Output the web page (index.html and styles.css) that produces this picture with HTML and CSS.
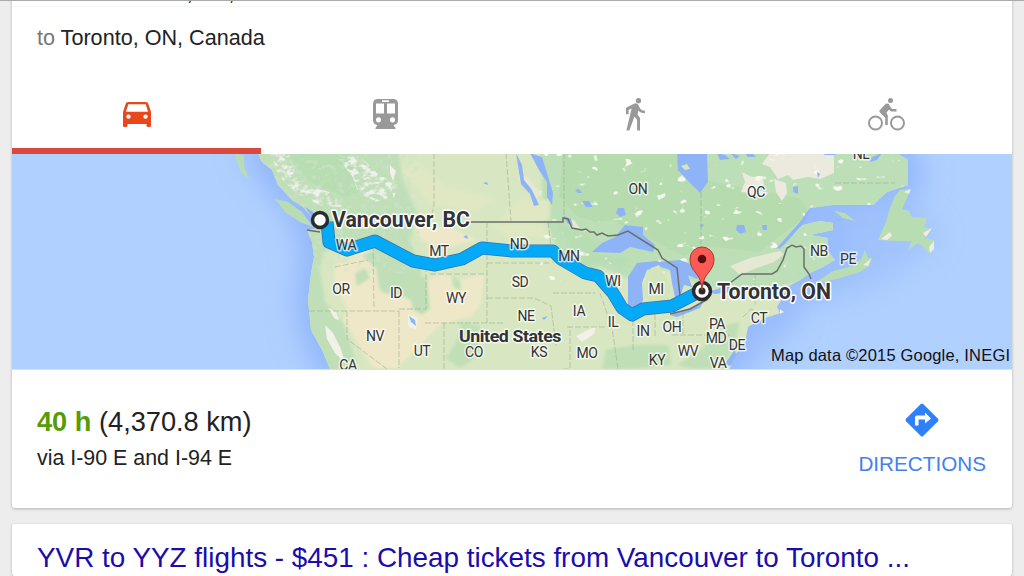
FILE: index.html
```html
<!DOCTYPE html>
<html lang="en">

<head>
  <meta charset="UTF-8">
  <title>Vancouver to Toronto</title>
  <link rel="stylesheet" href="styles.css">
</head>

<body>
  <div class="card directions-card">
    <div class="place from"><span>from</span> Vancouver, BC, Canada</div>
    <div class="place to"><span>to</span> Toronto, ON, Canada</div>

    <div class="tabs">
      <div class="tab active">
        <svg width="28" height="25" viewBox="0 0 28 25">
          <path fill="currentColor" fill-rule="evenodd" d="M5 0h18q1.700 0 2.300 1.700L28 10v13.500q0 1.500-1.500 1.500h-1.500q-1.500 0-1.500-1.500V22h-19v1.500Q4.500 25 3 25H1.500Q0 25 0 23.500V10L2.700 1.700Q3.300 0 5 0zM5.300 2.200L2.900 9.800h22.200L22.700 2.200zM5.500 12.400a2.200 2.200 0 1 0 .01 0zM22.500 12.400a2.200 2.200 0 1 0 .01 0z"/>
        </svg>
      </div>
      <div class="tab">
        <svg width="25" height="30" viewBox="0 0 25 30">
          <path fill="currentColor" fill-rule="evenodd" d="M5 0h15q5 0 5 5v16q0 4.500-4.500 5l2 3v1h-20v-1l2-3Q0 25.500 0 21V5q0-5 5-5zM9 1.300v1.700h7V1.300zM3 4.500v10h8v-10zM14 4.500v10h8v-10zM5.500 18.300a2.600 2.600 0 1 0 .01 0zM19.500 18.300a2.600 2.600 0 1 0 .01 0z"/>
        </svg>
      </div>
      <div class="tab">
        <svg width="20" height="33" viewBox="0 0 20 33">
          <circle cx="12.500" cy="2.700" r="2.600" fill="currentColor"/>
          <path fill="currentColor" d="M8.500 5.500h1.800q1.200 0 1.900 1.300l2.200 4.200q1.200 1.700 4.600 1.700v2.600q-4.500 0-6.600-2.800l-.8 4.300 2.400 3.200V32.500h-2.900V22l-2.600-3.500L3.300 32.500H.4L5.600 10.500l-3 1.600v4.100H0v-6.400z"/>
        </svg>
      </div>
      <div class="tab">
        <svg width="37" height="33" viewBox="0 0 37 33">
          <g fill="none" stroke="currentColor" stroke-width="2">
            <circle cx="7.500" cy="25" r="6.500"/>
            <circle cx="29.500" cy="25" r="6.500"/>
          </g>
          <circle cx="22.500" cy="2.600" r="2.500" fill="currentColor"/>
          <path fill="none" stroke="currentColor" stroke-width="2.600" stroke-linejoin="round" d="M18.500 27v-8.500l-5-4.500 5.500-6.500 4.500 4.700h5"/>
          <path fill="currentColor" d="M11 13l7-7.500 3 .5 1.500 4-4 4.500 1.500 4-3 1z"/>
        </svg>
      </div>
    </div>

    <svg class="map" width="1000" height="215" viewBox="12 154 1000 215">
      <defs>
        <path id="mainland" d="M258 153l4 9 10 8 6 15 14 15 11 7 7 8 10 13-13 2 5 12 2 15-3 16-3 27 3 30 11 20 8 19h400l3-12 12-14 3-16 12-7L780 313l-3-6 6-10 4-10 13-7 10-7 13-6 12-7-8-10 1-12-18-3L833 230v-7l-13-2-17 4-13 10-10 15-2-2L800 222l10-14 23-3h40l14-13 21-7v-25l-11-7z"/>
        <clipPath id="land">
          <use href="#mainland"/>
        </clipPath>
        <clipPath id="rockies">
          <path d="M270 153l18 0 12 30 32 10 10 14-20-1-25-12-18-18zM338 158l22-2 18 18 20 10-4 14-18 4-18-10-6-16z"/>
        </clipPath>
        <filter id="rock" x="0" y="0" width="1" height="1">
          <feTurbulence type="fractalNoise" baseFrequency=".14 .2" numOctaves="3" seed="4"/>
          <feColorMatrix values="0 0 0 0 .86  0 0 0 0 .86  0 0 0 0 .83  0 5 0 0 -2.200"/>
        </filter>
        <filter id="relief" x="0" y="0" width="1" height="1">
          <feTurbulence type="fractalNoise" baseFrequency=".16 .2" numOctaves="3" seed="8"/>
          <feColorMatrix values="0 0 0 0 .6  0 0 0 0 .77  0 0 0 0 .6  0 6 0 0 -3.200"/>
        </filter>
        <filter id="flecks" x="0" y="0" width="1" height="1">
          <feTurbulence type="fractalNoise" baseFrequency=".09 .12" numOctaves="2" seed="21"/>
          <feColorMatrix values="0 0 0 0 .93  0 0 0 0 .95  0 0 0 0 .87  0 12 0 0 -8.400"/>
        </filter>
        <filter id="soft"><feGaussianBlur stdDeviation="1.500"/></filter>
        <filter id="shelf" filterUnits="userSpaceOnUse" x="0" y="130" width="1024" height="260"><feGaussianBlur stdDeviation="14"/></filter>
      </defs>

      <rect x="12" y="153" width="1000" height="216" fill="#b0d0ff"/>
      <use href="#mainland" class="shelf" filter="url(#shelf)"/>
      <path filter="url(#shelf)" fill="#9bbefc" opacity=".7" d="M790 200l110-20 40 60-60 45-80 25-30 40-30 20z"/>

      <!-- land -->
      <use href="#mainland" fill="#d8e7c2"/>
      <g clip-path="url(#land)">
        <path filter="url(#soft)" fill="#c0dfb8" d="M240 150h158l5 30 14 32-7 30 12 28-10 30-25-5-17-14-12-33-17-5-18 10-3 18 5 30 18 22 14 40-8 10h-50V220z"/>
        <path fill="#b9ddb2" d="M288 153h60l12 14-2 26-14 4-30-12-14-14z"/>
        <path filter="url(#soft)" fill="#bcdfb7" d="M540 150h380v70l-110 60-60 12-50-6-22-15-40-2-8 10-30-12-18 8-22-18-16-40z"/>
        <path fill="#b5dbae" d="M563 153h114l2 18 20 22 10-12 52 10 40 8 8 15-50 38-50-6-25 10-35-18-22-8-12-10-18 2-20-6-18-20z"/>
        <path filter="url(#soft)" fill="#b9ddb3" d="M556 222l30 10 16 10-6 12 34 4-8 12-24-8-20 8-12-30z"/>
        <path filter="url(#soft)" fill="#efe8c8" d="M336 264l26-8 14 12 4 25 22 3 26 16v-32l14-6 16 6 26-6-3 30-10 12-30 8-14 14-30 30H374l-10-14-20-34 3-12-13-25zM414 225l38 3 25 12-35 8-20-8zM362 245l12 4-14 8-25 2z"/>
        <path filter="url(#soft)" fill="#dfe8c3" d="M402 170l14-8 30 25 50 12-20 12-45-6zM520 200h30v20h-50zM490 225h50l8 12-40 0z"/>
        <path filter="url(#soft)" fill="#c0dfb6" d="M462 322l18 4-2 30-18 12-14-10 10-16zM640 345l28 0 4 20-40 4h-30l4-20zM700 350l25-25 15-3-5 22-12 25h-30l-16-4zM410 275l16 2 4 32-8 6-10-6zM452 276l8 4 1 12-8-6zM355 274l10-6 5 10-13 8z"/>
        <path fill="#ece9df" d="M770 153h64v20l-14 6-12-2-15 3-5-5-10 4-8-12-8-3zM742 172l10 5 10-1 2 8-5 6 10 3-8 5-12-5-8-1 4-10zM774 179l12 4 1 10-5 8-6-9z"/>
        <path fill="#e5e9d3" d="M730 266l20-8 30-7 4 3-10 8-20 7-14 6zM564 218l10 2 7 10-10-2zM518 175l10 3 14 16-6 4-8-14-8-2z"/>
        <rect x="540" y="153" width="370" height="130" filter="url(#flecks)"/>
        <rect x="255" y="153" width="165" height="120" filter="url(#relief)" opacity=".55"/>
        <g clip-path="url(#rockies)">
          <rect x="240" y="153" width="190" height="216" filter="url(#rock)"/>
        </g>
        <path fill="#f1f1e8" d="M328 308l8 4 3 8-4-1zM325 325l8 8 8 16 4 14-10-10-8-14zM408 314l10 4-2 12-8-4zM390 165l6 6-3 10-3-8zM588 330l8-4-2 8-12 8-6-6z"/>
      </g>
      <g fill="#b9ddb2">
        <path d="M234 153l10 3v11l5 12-8-7z"/>
        <path d="M275 199l13 3 14 10 11 15-13-5-15-10z"/>
        <path d="M818 281l15-10 20-5 9-8 3-8 3 8 4 0-3 8-9 6-20 6-15 4z"/>
        <path d="M834 211l11 2 10 8-12-3z"/>
        <path d="M900 190L910 189L907 198L902 209L909 211L912 217L927 218L924 227L932 229L924 238L934 240L934 250L928 253L924 247L918 243L908 250L912 241L897 241L878 240L886 222L890 208L895 196Z"/>
      </g>
      <path fill="#f0ecdf" d="M881 239l9-7 2 4-5 4zM904 192l7-3-2 5zM929 247l5-6 0 8-4 4zM923 233l9-5-6 9zM863 265l8-6-3 7zM810 206l4-1-3 3zM780 309l4 3-4 2z"/>

      <!-- lakes -->
      <g fill="#8fb3f7">
        <path d="M677 153l1 17 12 13 10 10 8-11-1-29z"/>
        <path d="M592 252l10-9 13-6 10-12 18 2v8l12 10-2 7-23-5-10 6z"/>
        <path d="M628 309v-32l9-14 20-2 6 4-16 5-5 13 1 17-5 10z"/>
        <path d="M658 262l22-2 10 4 10 11-3 4-9-4 4 12-8-2-4 12h-5l-3-14-2-13-12-4z"/>
        <path d="M670 315l20-7 13-6-3 6-23 9zM708 292l22-7v7l-15 2z"/>
        <path d="M530 153l12 4 5 16 6 20-1 12-5-8 0-15-8-12zM516 153l6 12 2 15 8 10 7 15-5 1-4-12-9-10-3-18z"/>
        <path d="M305 207l8 5 6 9-8-5zM618 208l6 0 2 7-6 2-4-4zM409 316l6 4 1 6-5-4zM776 249l24-27 10-14-4 12-22 25zM717 153l8 2 5 4-10 1zM737 225l7 0 2 7-6 2-4-4zM793 187l5-1v8l-5-2zM745 153l8 1 3 3-8 0zM762 225l5 0 0 5-4 0zM564 216l7 3 2 7-6-3zM582 201l7 0 4 6-7 0zM575 190l4-1 3 4-4 0zM730 153l10 3-4 3zM463 237l4-2 1 4zM483 183l4-1 1 3zM817 172l3 2-2 4zM822 153l16 0-3 2-10 0zM870 158l12-5-5 7-7 2zM725 364l8-12-2-8 4 3 1 9-6 10zM700 223l4 2-3 3zM542 318l6-2-4 4z"/>
      </g>
      <path fill="#d3e5bd" d="M681 166l6-2 3 5-5 1zM651 268l8-3 4 8 8 13-3 15-22 4-2-18z"/>

      <!-- state and country lines -->
      <path class="state-line" d="M434 153v52l-4 17M506 153l5 68M564 153v65M701 192v52M335 267l33-7M373 237l1 72M309 311h90M347 311v28l40 30M399 311v57M399 309h27v-38M430 274h57M487 222v101M425 323h78M444 323v46M487 263h64M487 298h47l17 8 5 40M548 222l5 41M553 293h42M567 327h45M563 369h7v-42M600 293l12 35 6 41M633 320v30M655 314v22M672 335h58M683 312v23M755 275v32M835 183h60M743 317l8-8 12 5"/>
      <path class="border-line" d="M307 230l13 2M470 222h93v-4l5 1 4 9 10 2 4-1 4 3 4 0 3 3 5-2 6 3 10-1 10-4 30 19 4 8 15 10 3 28M670 314l20-5 18-10M730 283l12-9h30l5-3 6-11 4-12 5-3 4 2 5-1 3 3v18l5 7 2 5"/>

      <!-- route -->
      <path class="route-edge" d="M327 222l2 20 18 8 28-9 38 20 22 4 27-6 20-11 30 3h41l8 8 24 14 13 3 15 17 9 15 10 7 11-6 29-3 25-13"/>
      <path class="route-line" d="M327 222l2 20 18 8 28-9 38 20 22 4 27-6 20-11 30 3h41l8 8 24 14 13 3 15 17 9 15 10 7 11-6 29-3 25-13"/>

      <g class="label">
        <text x="346" y="250">WA</text>
        <text x="341" y="294">OR</text>
        <text x="396" y="298">ID</text>
        <text x="439" y="256">MT</text>
        <text x="456" y="303">WY</text>
        <text x="375" y="341">NV</text>
        <text x="422" y="356">UT</text>
        <text x="348" y="370">CA</text>
        <text x="474" y="357">CO</text>
        <text x="519" y="249">ND</text>
        <text x="520" y="287">SD</text>
        <text x="526" y="321">NE</text>
        <text x="539" y="357">KS</text>
        <text x="569" y="261">MN</text>
        <text x="579" y="316">IA</text>
        <text x="587" y="358">MO</text>
        <text x="613" y="286">WI</text>
        <text x="613" y="327">IL</text>
        <text x="643" y="336">IN</text>
        <text x="656" y="294">MI</text>
        <text x="672" y="332">OH</text>
        <text x="657" y="365">KY</text>
        <text x="688" y="356">WV</text>
        <text x="717" y="329">PA</text>
        <text x="716" y="343">MD</text>
        <text x="737" y="350">DE</text>
        <text x="718" y="368">VA</text>
        <text x="759" y="323">CT</text>
        <text x="638" y="194">ON</text>
        <text x="756" y="197">QC</text>
        <text x="861" y="159">NL</text>
        <text x="819" y="256">NB</text>
        <text x="848" y="264">PE</text>
        <text class="country" x="510" y="342" textLength="102" lengthAdjust="spacingAndGlyphs">United States</text>
      </g>
      <text class="city" x="332" y="227" textLength="138" lengthAdjust="spacingAndGlyphs">Vancouver, BC</text>
      <text class="city" x="717" y="299" textLength="114" lengthAdjust="spacingAndGlyphs">Toronto, ON</text>

      <!-- markers -->
      <circle class="stop" cx="320" cy="220" r="7.500"/>
      <circle class="stop" cx="702" cy="291" r="8.500"/>
      <circle cx="702" cy="291" r="3.500" fill="#2b2b2b"/>
      <path fill="#fb5a55" stroke="#a63a35" d="M702 290c-1-10-3-13-7-18-3-4-5-7-5-13a12 12 0 0 1 24 0c0 6-2 9-5 13-4 5-6 8-7 18z"/>
      <circle cx="702" cy="259" r="4.300" fill="#590c0c"/>

      <text class="credit" x="1010" y="361" textLength="239">Map data ©2015 Google, INEGI</text>
    </svg>

    <div class="summary">
      <div class="trip">
        <div class="time"><b>40 h</b> (4,370.8 km)</div>
        <div class="via">via I-90 E and I-94 E</div>
      </div>
      <div class="go">
        <svg width="34" height="34" viewBox="0 0 34 34">
          <path fill="#2f80fa" d="M15.800 1q1.200-1 2.400 0L33 15.800q1 1.200 0 2.400L18.200 33q-1.200 1-2.400 0L1 18.200q-1-1.200 0-2.400z"/>
          <path fill="#fff" d="M10 22.500v-8q0-2 2-2h8V9.500l6 6-6 5v-4h-6.500v6z"/>
        </svg>
        <span>DIRECTIONS</span>
      </div>
    </div>
  </div>

  <div class="card result">
    <a>YVR to YYZ flights - $451 : Cheap tickets from Vancouver to Toronto ...</a>
  </div>
</body>

</html>
```

FILE: styles.css
```css
body {
  margin: 0;
  height: 576px;
  box-sizing: border-box;
  padding: 0 12px;
  overflow: hidden;
  border-top: 1px solid #aaa;
  background-color: #ededed;
  font-family: "Liberation Sans", Arial, sans-serif;
  color: #222;
}

.card {
  background-color: #fff;
  border-radius: 3px;
  box-shadow: 0 1px 3px rgba(0, 0, 0, 0.25);
}

.directions-card {
  height: 527px;
  margin-top: -20px;
}

.place {
  box-sizing: border-box;
  padding-left: 25px;
  font-size: 21.6px;
  line-height: 24px;
  white-space: nowrap;
}

.place span {
  color: #777;
}

.from {
  height: 26px;
  line-height: 23px;
  border-bottom: 1px solid #f7f7f7;
}

.to {
  height: 71px;
  padding-top: 19px;
}

/* travel modes */
.tabs {
  display: grid;
  grid-template-columns: 249px 249px 251px 251px;
  height: 76px;
}

.tab {
  display: flex;
  align-items: center;
  justify-content: center;
  box-sizing: border-box;
  padding-top: 2px;
  border-bottom: 6px solid transparent;
  color: #999;
}

.tab.active {
  color: #e8481c;
  border-bottom-color: #da4a3c;
}

/* map */
.map {
  display: block;
  border-bottom: 1px solid #e0e0e0;
}

.shelf {
  fill: #92b6fa;
  stroke: #92b6fa;
  stroke-width: 24;
}

.state-line {
  fill: none;
  stroke: #9aa891;
  stroke-width: 0.7;
  stroke-dasharray: 6 2;
  opacity: 0.8;
}

.border-line {
  fill: none;
  stroke: #6a6f6a;
  stroke-width: 1.5;
}

.route-edge,
.route-line {
  fill: none;
  stroke: #3274ad;
  stroke-width: 13;
  stroke-linejoin: round;
}

.route-line {
  stroke: #04aaf8;
  stroke-width: 11.5;
}

.label text,
.city {
  font-family: Roboto, sans-serif;
  paint-order: stroke;
  stroke: rgba(255, 255, 255, 0.7);
  stroke-width: 3px;
  stroke-linejoin: round;
  fill: #333;
}

.label text {
  font-size: 14px;
  letter-spacing: -0.4px;
  text-anchor: middle;
}

.label .country {
  font-size: 17px;
  font-weight: bold;
}

.city {
  font-size: 22.5px;
  font-weight: bold;
  stroke: #fff;
}

.stop {
  fill: #fff;
  stroke: #2b2b2b;
  stroke-width: 3.5;
}

.credit {
  font-size: 16.5px;
  text-anchor: end;
  fill: #111;
}

/* trip summary */
.summary {
  display: flex;
  justify-content: space-between;
  padding: 33px 26px 0 25px;
}

.time {
  font-size: 27.2px;
  line-height: 38px;
}

.time b {
  color: #579b08;
}

.via {
  font-size: 21.4px;
  line-height: 34px;
}

.go {
  display: flex;
  flex-direction: column;
  align-items: center;
  color: #4480ee;
  font-size: 20.7px;
}

.go span {
  margin-top: 15px;
}

.result {
  height: 37px;
  margin-top: 16px;
  padding: 15px 25px 0;
  color: #1a0dab;
  font-size: 27.85px;
  line-height: 37px;
  white-space: nowrap;
}
```
